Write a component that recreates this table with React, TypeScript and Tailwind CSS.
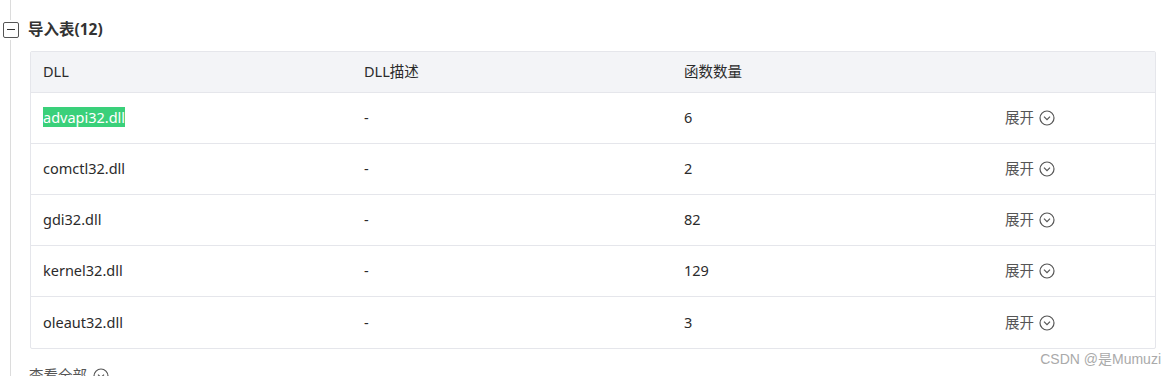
import React from "react";

const rows = [
  { name: "advapi32.dll", count: "6", hl: true },
  { name: "comctl32.dll", count: "2" },
  { name: "gdi32.dll", count: "82" },
  { name: "kernel32.dll", count: "129" },
  { name: "oleaut32.dll", count: "3" },
];

function Chevron() {
  return (
    <svg width="16" height="16" viewBox="0 0 16 16" fill="none" className="inline-block shrink-0">
      <circle cx="8" cy="8" r="7" stroke="#555" strokeWidth="1.2" />
      <path d="M5 6.6 L8 9.6 L11 6.6" stroke="#555" strokeWidth="1.2" fill="none" />
    </svg>
  );
}

export default function App() {
  return (
    <div
      className="relative w-[1176px] h-[376px] overflow-hidden bg-white text-[14.5px] text-[#2b2b2b]"
      style={{ fontFamily: '"Noto Sans", "Noto Sans CJK SC", sans-serif' }}
    >
      <div className="absolute left-[10px] top-0 h-[20px] w-px bg-[#dcdcdc]" />
      <div className="absolute left-[10px] top-[40px] bottom-0 w-px bg-[#dcdcdc]" />
      <div className="pt-[21px] pl-[3px] flex items-center h-[38px]">
        <div className="w-[16px] h-[16px] border border-[#555] rounded-[2px] flex items-center justify-center bg-white">
          <div className="w-[8px] h-px bg-[#333]" />
        </div>
        <span className="ml-[9px] font-bold text-[15.5px] text-[#333]">导入表(12)</span>
      </div>
      <div className="ml-[30px] mt-[13px] w-[1126px] border border-[#e5e6eb] rounded-[2px]">
        <div className="flex h-[41px] items-center bg-[#f3f4f7] border-b border-[#e5e6eb]">
          <div className="w-[321px] pl-[12px]">DLL</div>
          <div className="w-[320px] pl-[12px]">DLL描述</div>
          <div className="w-[321px] pl-[12px]">函数数量</div>
          <div className="flex-1 pl-[12px]"></div>
        </div>
        {rows.map((r, i) => (
          <div
            key={r.name}
            className={`flex h-[51px] items-center ${i < rows.length - 1 ? "border-b border-[#e5e6eb]" : ""}`}
          >
            <div className="w-[321px] pl-[12px]">
              {r.hl ? <span className="bg-[#3ad07a] text-white">{r.name}</span> : r.name}
            </div>
            <div className="w-[320px] pl-[12px]">-</div>
            <div className="w-[321px] pl-[12px]">{r.count}</div>
            <div className="flex-1 pl-[12px] flex items-center gap-[5px] text-[#555]">
              <span>展开</span>
              <Chevron />
            </div>
          </div>
        ))}
      </div>
      <div className="ml-[29px] mt-[16px] flex items-center gap-[6px] text-[#555]">
        <span>查看全部</span>
        <Chevron />
      </div>
      <div
        className="absolute right-[15px] top-[349px] text-[14px] text-[#aaa]"
        style={{ fontFamily: '"Liberation Sans", "Noto Sans CJK SC", sans-serif' }}
      >
        CSDN @是Mumuzi
      </div>
    </div>
  );
}
